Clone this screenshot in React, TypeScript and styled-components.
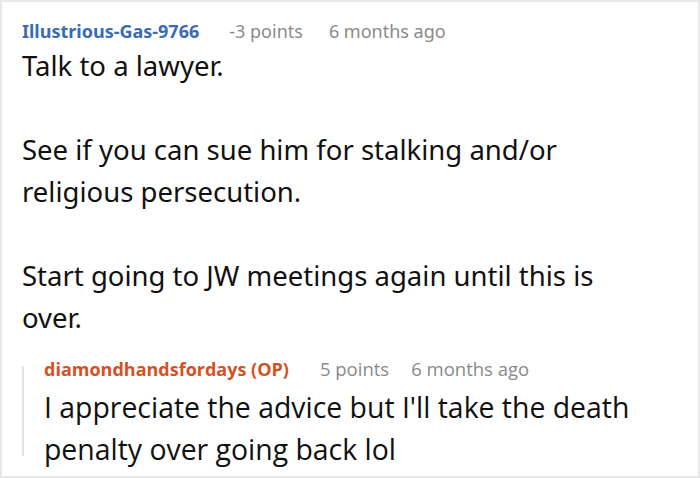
import styled, { createGlobalStyle } from "styled-components";

const GlobalStyle = createGlobalStyle`
	html, body {
		margin: 0;
		padding: 0;
		background: #fff;
	}
`;

export default function App() {
	return (
		<>
			<GlobalStyle />
			<Frame>
				<Meta>
					<User>Illustrious-Gas-9766</User>
					<Points>-3 points</Points>
					<Points>6 months ago</Points>
				</Meta>
				<Body>
					<p>Talk to a lawyer.</p>
					<p>See if you can sue him for stalking and/or religious persecution.</p>
					<p>Start going to JW meetings again until this is over.</p>
				</Body>
				<Reply>
					<Rail />
					<div>
						<Meta $reply>
							<User $op>diamondhandsfordays (OP)</User>
							<Points>5 points</Points>
							<Points>6 months ago</Points>
						</Meta>
						<ReplyBody>
							I appreciate the advice but I'll take the death penalty over going back lol
						</ReplyBody>
					</div>
				</Reply>
			</Frame>
		</>
	);
}

const condensed = `"Open Sans", "Noto Sans", sans-serif`;

const Frame = styled.div`
	width: 700px;
	height: 478px;
	box-sizing: border-box;
	border: 2px solid #e8e8e8;
	padding: 16px 0 0 20px;
	font-family: "Noto Sans", "Open Sans", sans-serif;
	color: #111;
	overflow: hidden;
`;

const Meta = styled.div<{ $reply?: boolean }>`
	display: flex;
	align-items: baseline;
	gap: ${(p) => (p.$reply ? "22px" : "26px")};
	font-size: 18px;
	line-height: 26px;
	${(p) => p.$reply && `font-family: ${condensed}; font-stretch: 90%; font-size: 18.5px;`}
`;

const User = styled.span<{ $op?: boolean }>`
	font-weight: 700;
	color: ${(p) => (p.$op ? "#d4521f" : "#3a6bb5")};
	margin-right: ${(p) => (p.$op ? "9px" : "4px")};
	${(p) => p.$op && "font-size: 18px;"}
`;

const Points = styled.span`
	color: #8a8a8a;
`;

const Body = styled.div`
	margin-top: 1px;
	font-size: 27.5px;
	line-height: 42px;
	width: 590px;

	p {
		margin: 0 0 42px;
	}
	p:last-child {
		margin-bottom: 0;
	}
`;

const Reply = styled.div`
	margin-top: 17px;
	display: grid;
	grid-template-columns: 2px 1fr;
	column-gap: 20px;
`;

const Rail = styled.div`
	background: #e4e4e4;
	margin: 10px 0 14px;
`;

const ReplyBody = styled.div`
	margin-top: 4px;
	font-family: ${condensed};
	font-stretch: 90%;
	font-size: 28.4px;
	line-height: 42px;
	width: 600px;
`;
